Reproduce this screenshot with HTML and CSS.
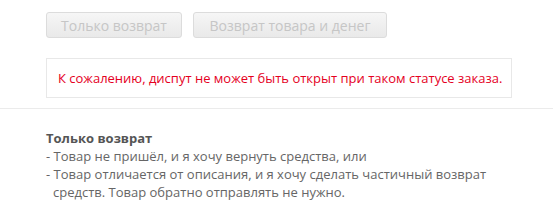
FILE: index.html
```html
<!DOCTYPE html>
<html lang="ru">
<head>
    <meta charset="UTF-8">
    <title>Открыть спор</title>
    <link rel="stylesheet" href="styles.css">
</head>
<body>
    <div class="dispute-top">
        <div class="dispute-types">
            <button class="type-btn type-btn-short" disabled>Только возврат</button>
            <button class="type-btn type-btn-long" disabled>Возврат товара и денег</button>
        </div>
        <div class="dispute-error">К сожалению, диспут не может быть открыт при таком статусе заказа.</div>
    </div>
    <div class="dispute-help">
        <div class="help-title">Только возврат</div>
        <ul class="help-list">
            <li>Товар не пришёл, и я хочу вернуть средства, или</li>
            <li>Товар отличается от описания, и я хочу сделать частичный возврат средств. Товар обратно отправлять не нужно.</li>
        </ul>
    </div>
</body>
</html>
```

FILE: styles.css
```css
body {
    margin: 0;
    font-family: "Open Sans", Arial, sans-serif;
    font-size: 13px;
    background-color: #fff;
    color: #666;
}
.dispute-top {
    padding: 12px 0 10px 46px;
    border-bottom: 1px solid #ebebeb;
}
.dispute-types {
    display: flex;
    gap: 11px;
}
.type-btn {
    height: 26px;
    padding: 0;
    border: 1px solid #dcdcdc;
    border-radius: 3px;
    background: linear-gradient(#f6f6f6, #e9e9e9);
    color: #c6c6c6;
    font-family: "Open Sans", Arial, sans-serif;
    font-size: 14px;
}
.type-btn-short {
    width: 136px;
}
.type-btn-long {
    width: 194px;
}
.dispute-error {
    width: 453px;
    margin-top: 20px;
    padding: 10px 0 10px 11px;
    border: 1px solid #e8e8e8;
    color: #e5001e;
    line-height: 18px;
}
.dispute-help {
    padding: 20px 0 0 46px;
    line-height: 18px;
}
.help-title {
    font-weight: bold;
    color: #555;
}
.help-list {
    list-style: none;
    margin: 0;
    padding: 0;
    width: 445px;
}
.help-list li {
    padding-left: 7px;
    text-indent: -7px;
}
.help-list li::before {
    content: "- ";
}
```
